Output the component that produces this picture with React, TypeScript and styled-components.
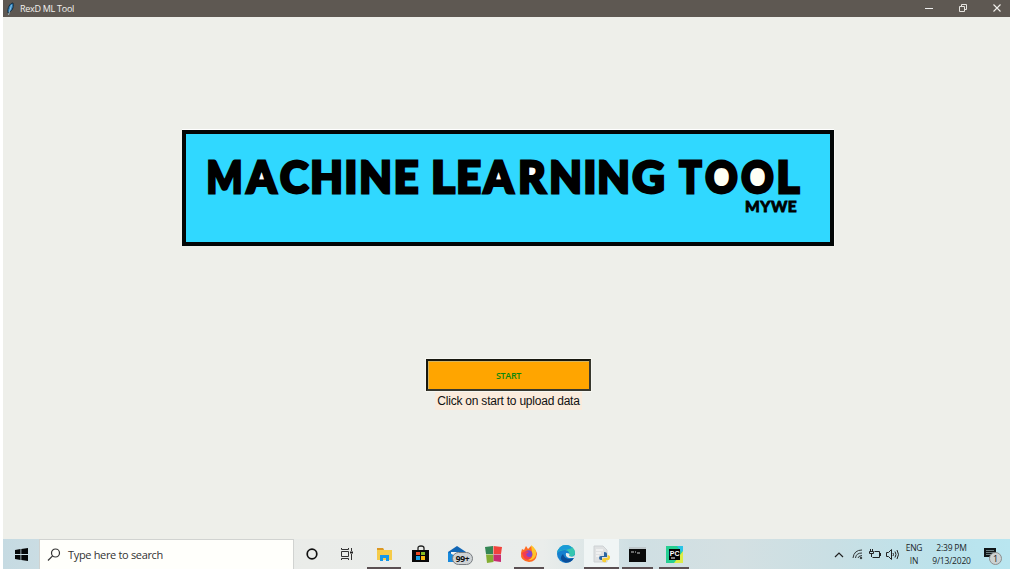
import React from "react";
import styled, { createGlobalStyle } from "styled-components";

const Global = createGlobalStyle`
  * { box-sizing: border-box; }
  body { margin: 0; background: #fff; overflow: hidden; font-family: "Open Sans", "Noto Sans", sans-serif; }
`;

const Screen = styled.div`
  width: 1010px;
  height: 573px;
  padding: 0 0 4px 3px;
  display: flex;
  flex-direction: column;
`;

const TitleBar = styled.header`
  height: 17px;
  flex: none;
  display: flex;
  align-items: center;
  background: #5e5852;
  color: #f3f1ee;
  padding-left: 3px;
`;

const WindowTitle = styled.span`
  font-size: 9px;
  line-height: 16px;
  letter-spacing: -0.28px;
  margin-left: 4px;
  flex: 1;
`;

const WindowControls = styled.div`
  display: flex;
  margin-right: -4px;
`;

const WindowButton = styled.span`
  width: 34px;
  height: 17px;
  display: flex;
  align-items: center;
  justify-content: center;
  padding-bottom: 2px;
`;

const Client = styled.main`
  flex: 1;
  background: #eeefea;
  display: flex;
  flex-direction: column;
  align-items: center;
  padding: 113px 0 0 3px;
`;

const Banner = styled.section`
  width: 652px;
  height: 116px;
  border: 4px solid #020606;
  background: #30d8ff;
  color: #000;
  padding: 16px 0 0 20px;
  box-shadow: 0 -1px 0 #fff, 1px 0 0 #f8f8f5;
  font-family: Lato, "Open Sans", sans-serif;
  font-weight: 900;
`;

const Heading = styled.h1`
  margin: 0;
  height: 54px;
  display: flex;
  font-size: 43px;
  line-height: 54px;
  font-weight: 900;
  -webkit-text-stroke: 2.8px #000;
`;

const Word = styled.span<{ $w: number }>`
  display: flex;
  justify-content: space-between;
  width: ${(p) => p.$w}px;
  margin-right: 13px;
`;

const Letter = styled.span<{ $w: number; $s?: number; $hole?: string }>`
  width: ${(p) => p.$w}px;
  display: flex;
  justify-content: center;
  transform: scaleX(${(p) => p.$s ?? 1});
  background: ${(p) => p.$hole ?? "none"};
`;

const Signature = styled.div`
  font-size: 15.5px;
  line-height: 18px;
  margin: -7px 0 0 539px;
  letter-spacing: 0.5px;
  -webkit-text-stroke: 0.8px #000;
`;

const StartButton = styled.button`
  margin: 113px 0 0 1px;
  width: 165px;
  height: 32px;
  border: 2px solid;
  border-color: #17170f #38382f #38382f #17170f;
  border-radius: 0;
  background: #ffa500;
  box-shadow: inset 1px 1px 0 #d5b55f, 0 0 0 1px #f6f6f1;
  color: #0c870c;
  font: 600 9px "Open Sans", sans-serif;
  letter-spacing: -0.35px;
  padding: 0;
`;

const Hint = styled.p`
  margin: 1px 0 0 1px;
  padding: 0 2px;
  height: 18px;
  background: #faebdc;
  color: #111;
  font: 12px/18px "Liberation Sans", Arial, sans-serif;
  letter-spacing: -0.22px;
  white-space: nowrap;
`;

const Taskbar = styled.footer`
  flex: none;
  height: 30px;
  display: flex;
  color: #111;
  background: linear-gradient(90deg, #c5dae2 0, #dce5e6 160px, #eaece9 300px, #eaedeb 540px, #cfdfe3 630px, #d4e0e2 730px, #c9dfe4 830px, #b9e3ed 960px, #b9e6f0 100%);
`;

const Slot = styled.span<{ $w: number; $active?: boolean; $open?: boolean }>`
  width: ${(p) => p.$w}px;
  height: 30px;
  flex: none;
  display: flex;
  align-items: center;
  justify-content: center;
  position: relative;
  background: ${(p) => (p.$active ? "#f0f5f5" : "transparent")};
  &::after {
    content: "";
    display: ${(p) => (p.$open ? "block" : "none")};
    position: absolute;
    bottom: 0;
    left: ${(p) => (p.$active ? 0 : 3)}px;
    right: ${(p) => (p.$active ? 0 : 3)}px;
    height: 2px;
    background: #5b5053;
  }
`;

const Search = styled.div`
  width: 255px;
  height: 30px;
  flex: none;
  display: flex;
  align-items: center;
  gap: 7px;
  padding-left: 7px;
  border: 1px solid #d1d3d1;
  border-bottom: 0;
  background: #fffffb;
  color: #333;
  font-size: 11px;
  letter-spacing: -0.33px;
`;

const Count = styled.span`
  position: absolute;
  left: 14px;
  top: 13px;
  width: 21px;
  height: 13px;
  border: 1px solid #777c80;
  border-radius: 7px;
  background: #cfd3d5;
  font-size: 8.5px;
  font-weight: 700;
  line-height: 11px;
  text-align: center;
  letter-spacing: -0.3px;
`;

const Tray = styled.div`
  margin-left: auto;
  display: flex;
`;

const Stack = styled.div<{ $w: number }>`
  width: ${(p) => p.$w}px;
  padding-top: 2px;
  text-align: center;
  font-size: 8.5px;
  line-height: 13px;
  letter-spacing: -0.2px;
  color: #202628;
  white-space: nowrap;
`;

const NoticeIcon = styled.svg`
  margin-right: 6px;
`;

const NoticeCount = styled.span`
  position: absolute;
  left: 13px;
  top: 13px;
  width: 13px;
  height: 13px;
  border: 1px solid #8c8f90;
  border-radius: 50%;
  background: #ccd2d2;
  font-size: 9px;
  line-height: 11px;
  text-align: center;
`;

const triangle = "linear-gradient(#fff, #fff) 50% 23px / 8px 12px no-repeat";
const bowl = "linear-gradient(#fff, #fff) 11px 17px / 9px 10px no-repeat";
const ring = "radial-gradient(ellipse 11px 13px at 50% 27px, #fffff5 98%, transparent)";

type Glyph = [string, number, number?, string?];
const words: { width: number; glyphs: Glyph[] }[] = [
  { width: 212, glyphs: [["M", 37, 0.88], ["A", 33, 0.98, triangle], ["C", 29, 1], ["H", 33, 0.98], ["I", 12, 0.98], ["N", 33, 0.98], ["E", 24, 1]] },
  { width: 234, glyphs: [["L", 24, 1.05], ["E", 24, 1], ["A", 33, 0.98, triangle], ["R", 30, 0.98, bowl], ["N", 33, 0.98], ["I", 12, 0.98], ["N", 33, 0.98], ["G", 33, 1.04]] },
  { width: 122, glyphs: [["T", 25, 0.86], ["O", 35, 0.93, ring], ["O", 35, 0.93, ring], ["L", 24, 1.02]] },
];

export default function App() {
  return (
    <>
      <Global />
      <Screen>
        <TitleBar>
          <svg width="10" height="14" viewBox="0 0 10 14">
            <path d="M2 11C1 6 4 1 7 1c1 5-1 8-4 9z" fill="#3387c4" stroke="#152b3b" />
            <path d="M2.500 13L5.500 3" stroke="#b5dff5" strokeWidth=".7" />
          </svg>
          <WindowTitle>RexD ML Tool</WindowTitle>
          <WindowControls>
            <WindowButton><svg width="8" height="8"><path d="M0 4.5h8" stroke="#eee" /></svg></WindowButton>
            <WindowButton>
              <svg width="8" height="8" fill="none" stroke="#e5e3df"><path d="M.5 2.500h5v5h-5zM2.500 2V.5h5v5H6" /></svg>
            </WindowButton>
            <WindowButton><svg width="8" height="8"><path d="M.5.5l7 7m0-7l-7 7" stroke="#f2f0ed" strokeWidth="1.1" /></svg></WindowButton>
          </WindowControls>
        </TitleBar>

        <Client>
          <Banner>
            <Heading aria-label="MACHINE LEARNING TOOL">
              {words.map((word, i) => (
                <Word key={i} $w={word.width}>
                  {word.glyphs.map(([char, w, s, hole], j) => (
                    <Letter key={j} $w={w} $s={s} $hole={hole}>{char}</Letter>
                  ))}
                </Word>
              ))}
            </Heading>
            <Signature>MYWE</Signature>
          </Banner>
          <StartButton>START</StartButton>
          <Hint>Click on start to upload data</Hint>
        </Client>

        <Taskbar>
          <Slot $w={36}>
            <svg width="13" height="13"><path d="M0 2l5.500-.9v5H0zM6.300 1L13 0v6.100H6.300zM0 6.900h5.500v5L0 11.100zM6.300 6.900H13V13l-6.700-1z" fill="#050708" /></svg>
          </Slot>
          <Search>
            <svg width="14" height="14" fill="none" stroke="#333" strokeWidth="1.2"><circle cx="8.5" cy="5" r="4" /><path d="M5.600 7.900L1 12.500" /></svg>
            Type here to search
          </Search>
          <Slot $w={35}><svg width="12" height="12"><circle cx="6" cy="6" r="4.8" fill="none" stroke="#111" strokeWidth="1.7" /></svg></Slot>
          <Slot $w={35}>
            <svg width="13" height="12" fill="none" stroke="#333"><path d="M1.500 3.500h7v5h-7zM1.500 0v1.500h7V0M1.500 12v-1.500h7V12M11.500 0v3m0 3v6" /><path d="M10 3.500h3v2h-3z" fill="#222" stroke="none" /></svg>
          </Slot>
          <Slot $w={40} $open>
            <svg width="17" height="15"><path d="M1 1h6l1 2h8v10H1z" fill="#f5cb49" /><path d="M1 1h6l1 2H1z" fill="#dc9823" /><path d="M4 14V8h9v6h-3v-3H7v3z" fill="#1598e8" /></svg>
          </Slot>
          <Slot $w={34}>
            <svg width="18" height="18"><path d="M6 6V3q0-2 3-2t3 2v3" fill="none" stroke="#222" strokeWidth="1.300" /><path d="M0 5h17v12H0z" fill="#080808" /><path d="M4 7h4v3H4z" fill="#ed4a25" /><path d="M9 7h4v3H9z" fill="#86bd23" /><path d="M4 11h4v4H4z" fill="#18a2e8" /><path d="M9 11h4v4H9z" fill="#f9b910" /></svg>
          </Slot>
          <Slot $w={37}>
            <svg width="18" height="17"><path d="M0 6l9-6 9 6v10H0z" fill="#1166b5" /><path d="M3 6h12v4l-6 3-6-3z" fill="#f4f5f5" /><path d="M0 6l9 5 9-5v10H0z" fill="#1789dc" /></svg>
            <Count>99+</Count>
          </Slot>
          <Slot $w={36}>
            <svg width="17" height="17"><path d="M0 1l8-1v8H1z" fill="#348654" /><path d="M8.500 0l8.500 1-1 7H8.500z" fill="#f0443d" /><path d="M1 8.500h7.500V16L2 17z" fill="#83ad32" /><path d="M8.500 8.500H16V16l-7.500-1z" fill="#c92c70" /></svg>
          </Slot>
          <Slot $w={36} $open>
            <svg width="18" height="18"><path d="M2 4l2 1 2-4 2 3 3-3q5 3 6 8-1 8-8 8Q0 16 1 8z" fill="#ff6a23" /><path d="M11 0q6 4 5 10-2 6-8 5 6-2 4-8z" fill="#ffc52a" /><circle cx="8.500" cy="9" r="3.800" fill="#8646c6" /><path d="M2 8q3-3 7-1l-3 2q1 4 6 3-4 5-8 1z" fill="#f33d51" /></svg>
          </Slot>
          <Slot $w={37}>
            <svg width="18" height="18"><circle cx="9" cy="9" r="9" fill="#1680cf" /><path d="M0 8Q2 0 9 0q9 1 9 8 0 4-6 4 2-6-4-7-5 0-8 3z" fill="#35c6b0" /><path d="M0 8Q2 0 9 0q4 0 6 3L9 5Q4 4 0 8z" fill="#1a9bd8" /><path d="M6 9q2 7 11 4-4 6-10 4-6-3-1-8z" fill="#0b4e99" /><path d="M9 8q-1 4 3 5h5q1-1 1-3-2 3-6 1 2-3-3-3z" fill="#e9edeb" /></svg>
          </Slot>
          <Slot $w={35} $active $open>
            <svg width="17" height="18"><path d="M1 1h9l4 4v12H1z" fill="#dfe1e2" stroke="#ced2d4" /><path d="M3 5h7m-7 3h5m-5 3h3" stroke="#fff" /><path d="M11 7q3 0 3 2v3H9v3H8q-2 0-2-2t2-2h3z" fill="#2c65a0" /><path d="M14.500 10q3 0 2.500 3t-4 2v2q-4 1-4-2 0-2 3-2h2.500z" fill="#f8cf35" /></svg>
          </Slot>
          <Slot $w={37} $open>
            <svg width="17" height="15"><path d="M0 0h17v15H0z" fill="#090a0a" /><path d="M0 0h17v2H0z" fill="#bfc8cb" /><path d="M2 5h3m1 0h1m1 1h3" stroke="#ccc" /></svg>
          </Slot>
          <Slot $w={36} $open>
            <svg width="17" height="17"><path d="M0 0h17v17H0z" fill="#27cf92" /><path d="M11 0h6v8z" fill="#29c4e6" /><path d="M17 5v12H8z" fill="#ddec46" /><path d="M3 3h11v11H3z" fill="#050505" /><text x="3.800" y="9.800" fontSize="7" fontWeight="700" fontFamily="Liberation Sans, sans-serif" fill="#fff">PC</text><path d="M5 12h4" stroke="#fff" /></svg>
          </Slot>
          <Tray>
            <Slot $w={20}><svg width="10" height="7"><path d="M1 6l4-4 4 4" fill="none" stroke="#222" strokeWidth="1.200" /></svg></Slot>
            <Slot $w={17}><svg width="11" height="12" fill="none" stroke="#303536"><path d="M1 10Q2 2 10 2M3.500 10Q4 5 10 5M6 10q0-2 4-2.500" /><circle cx="9" cy="10" r=".8" fill="#222" /></svg></Slot>
            <Slot $w={17}><svg width="12" height="11" fill="none" stroke="#222"><path d="M5.500 2.500h5v6h-7M11.500 4v3M1.500 0v2m2-2v2M.5 2.500h4v2h-4zM2.500 5v3" /></svg></Slot>
            <Slot $w={18}><svg width="13" height="11" fill="none" stroke="#222"><path d="M.5 3.500h2l3-3v10l-3-3h-2zM7 4q1 1.500 0 3M9 2.500q2 3 0 6M11 1q3 4.500 0 9" /></svg></Slot>
            <Stack $w={26}>ENG<br />IN</Stack>
            <Stack $w={49}>2:39 PM<br />9/13/2020</Stack>
            <Slot $w={34}>
              <NoticeIcon width="12" height="13"><path d="M0 0h12v9H8v3L5 9H0z" fill="#111719" /><path d="M2 2.500h8m-8 2h8m-8 2h8" stroke="#92a9ae" strokeWidth=".7" /></NoticeIcon>
              <NoticeCount>1</NoticeCount>
            </Slot>
          </Tray>
        </Taskbar>
      </Screen>
    </>
  );
}
